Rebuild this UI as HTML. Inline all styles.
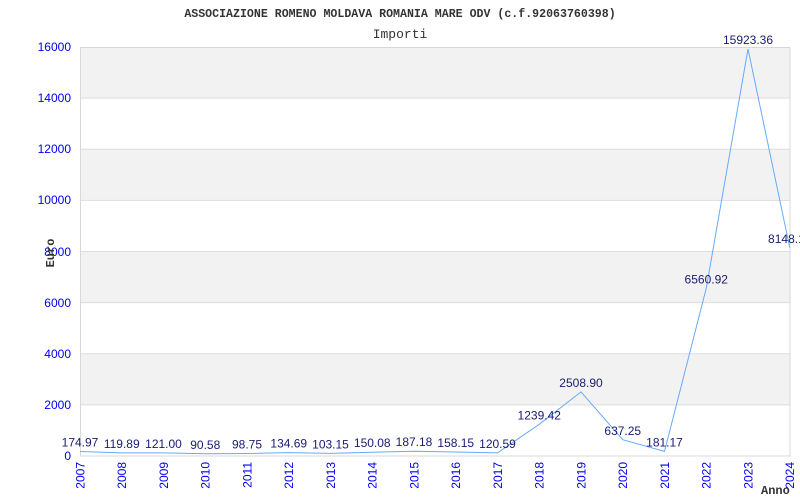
<!DOCTYPE html>
<html><head><meta charset="utf-8"><style>
html,body{margin:0;padding:0;background:#fff;}
svg{display:block;}
</style></head><body>
<svg width="800" height="500" xmlns="http://www.w3.org/2000/svg">
<rect width="800" height="500" fill="#fff"/>
<g fill="#f2f2f2">
<rect x="80" y="47" width="710" height="51.1"/>
<rect x="80" y="149.2" width="710" height="51.1"/>
<rect x="80" y="251.5" width="710" height="51.1"/>
<rect x="80" y="353.8" width="710" height="51.1"/>
</g>
<g stroke="#dddddd" stroke-width="1">
<line x1="80" y1="98.1" x2="790" y2="98.1"/>
<line x1="80" y1="149.2" x2="790" y2="149.2"/>
<line x1="80" y1="200.4" x2="790" y2="200.4"/>
<line x1="80" y1="251.5" x2="790" y2="251.5"/>
<line x1="80" y1="302.6" x2="790" y2="302.6"/>
<line x1="80" y1="353.8" x2="790" y2="353.8"/>
<line x1="80" y1="404.9" x2="790" y2="404.9"/>
</g>
<rect x="80.5" y="47.5" width="709.5" height="408.5" fill="none" stroke="#d8d8d8"/>
<text x="400" y="17" text-anchor="middle" font-family="Liberation Mono, monospace" font-weight="bold" font-size="11.6" fill="#333">ASSOCIAZIONE ROMENO MOLDAVA ROMANIA MARE ODV (c.f.92063760398)</text>
<text x="400" y="38" text-anchor="middle" font-family="Liberation Mono, monospace" font-size="13" fill="#333">Importi</text>
<g font-family="Liberation Sans, sans-serif" font-size="12" fill="#0000ee" text-anchor="end">
<text x="71" y="51">16000</text>
<text x="71" y="102">14000</text>
<text x="71" y="153">12000</text>
<text x="71" y="204">10000</text>
<text x="71" y="256">8000</text>
<text x="71" y="307">6000</text>
<text x="71" y="358">4000</text>
<text x="71" y="409">2000</text>
<text x="71" y="460">0</text>
</g>
<text transform="translate(54,253) rotate(-90)" text-anchor="middle" font-family="Liberation Mono, monospace" font-weight="bold" font-size="12" fill="#333">Euro</text>
<text x="761" y="494" font-family="Liberation Mono, monospace" font-weight="bold" font-size="12" fill="#333">Anno</text>
<g font-family="Liberation Sans, sans-serif" font-size="12" fill="#0000ee" text-anchor="end">
<text transform="translate(84.5,462) rotate(-90)">2007</text>
<text transform="translate(126.2,462) rotate(-90)">2008</text>
<text transform="translate(168,462) rotate(-90)">2009</text>
<text transform="translate(209.7,462) rotate(-90)">2010</text>
<text transform="translate(251.5,462) rotate(-90)">2011</text>
<text transform="translate(293.2,462) rotate(-90)">2012</text>
<text transform="translate(335,462) rotate(-90)">2013</text>
<text transform="translate(376.7,462) rotate(-90)">2014</text>
<text transform="translate(418.5,462) rotate(-90)">2015</text>
<text transform="translate(460.2,462) rotate(-90)">2016</text>
<text transform="translate(502,462) rotate(-90)">2017</text>
<text transform="translate(543.7,462) rotate(-90)">2018</text>
<text transform="translate(585.5,462) rotate(-90)">2019</text>
<text transform="translate(627.2,462) rotate(-90)">2020</text>
<text transform="translate(669,462) rotate(-90)">2021</text>
<text transform="translate(710.7,462) rotate(-90)">2022</text>
<text transform="translate(752.5,462) rotate(-90)">2023</text>
<text transform="translate(794.2,462) rotate(-90)">2024</text>
</g>
<polyline fill="none" stroke="#66aaff" stroke-width="1" points="80,451.5 121.75,452.9 163.5,452.9 205.25,453.7 247,453.5 288.75,452.6 330.5,453.4 372.25,452.2 414,451.2 455.75,452 497.5,452.9 539.25,424.3 581,391.9 622.75,439.7 664.5,451.4 706.25,288.3 748,49 789.75,247.7"/>
<g font-family="Liberation Sans, sans-serif" font-size="12" fill="#1a1a70" text-anchor="middle">
<text x="80" y="446.5">174.97</text>
<text x="121.75" y="448">119.89</text>
<text x="163.5" y="448">121.00</text>
<text x="205.25" y="449">90.58</text>
<text x="247" y="448.5">98.75</text>
<text x="288.75" y="447.5">134.69</text>
<text x="330.5" y="448.5">103.15</text>
<text x="372.25" y="447">150.08</text>
<text x="414" y="446">187.18</text>
<text x="455.75" y="447">158.15</text>
<text x="497.5" y="448">120.59</text>
<text x="539.25" y="419.3">1239.42</text>
<text x="581" y="387">2508.90</text>
<text x="622.75" y="435">637.25</text>
<text x="664.5" y="446.5">181.17</text>
<text x="706.25" y="283.3">6560.92</text>
<text x="748" y="44">15923.36</text>
<text x="789.75" y="243">8148.10</text>
</g>
</svg>
</body></html>
